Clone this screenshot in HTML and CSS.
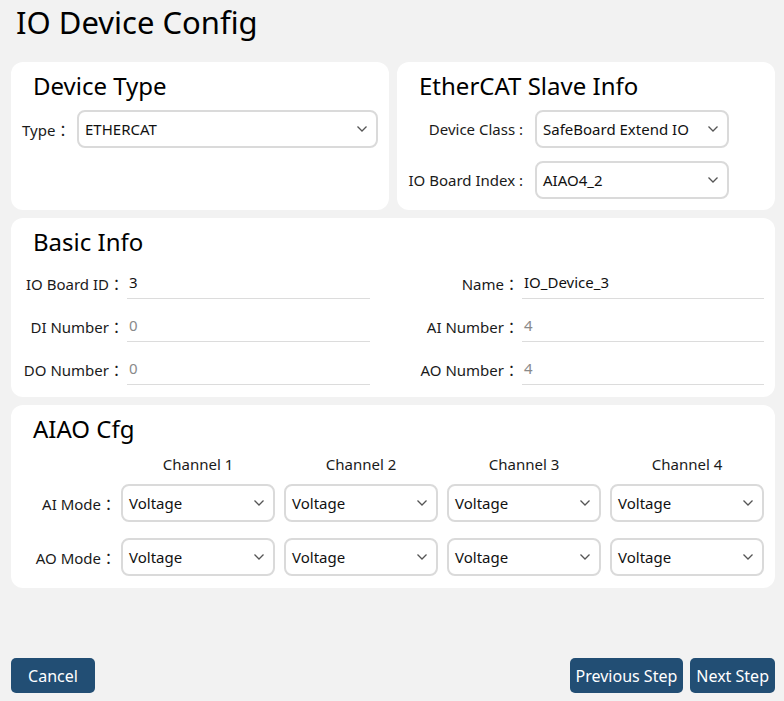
FILE: index.html
```html
<!DOCTYPE html>
<html lang="en">
<head>
    <meta charset="utf-8">
    <meta name="viewport" content="width=device-width, initial-scale=1.0">
    <title>IO Device Config</title>
    <link rel="stylesheet" href="styles.css">
</head>
<body>
    <h1 class="page-title">IO Device Config</h1>

    <div class="top-row">
        <!-- device type -->
        <div class="card">
            <h2 class="card-title">Device Type</h2>
            <div class="type-row">
                <label class="type-label">Type：</label>
                <div class="select">
                    <span>ETHERCAT</span>
                    <svg class="chevron" viewBox="0 0 10 6"><polyline points="0.5,0.5 5,5 9.5,0.5"/></svg>
                </div>
            </div>
        </div>

        <!-- ethercat slave -->
        <div class="card">
            <h2 class="card-title">EtherCAT Slave Info</h2>
            <div class="slave-form">
                <div class="slave-row">
                    <label class="slave-label">Device Class :</label>
                    <div class="select slave-select">
                        <span>SafeBoard Extend IO</span>
                        <svg class="chevron" viewBox="0 0 10 6"><polyline points="0.5,0.5 5,5 9.5,0.5"/></svg>
                    </div>
                </div>
                <div class="slave-row">
                    <label class="slave-label">IO Board Index :</label>
                    <div class="select slave-select">
                        <span>AIAO4_2</span>
                        <svg class="chevron" viewBox="0 0 10 6"><polyline points="0.5,0.5 5,5 9.5,0.5"/></svg>
                    </div>
                </div>
            </div>
        </div>
    </div>

    <!-- basic info -->
    <div class="card">
        <h2 class="card-title">Basic Info</h2>
        <div class="info-grid">
            <div class="field left">
                <label>IO Board ID：</label>
                <div class="line-input">3</div>
            </div>
            <div class="field right">
                <label>Name：</label>
                <div class="line-input">IO_Device_3</div>
            </div>
            <div class="field left">
                <label>DI Number：</label>
                <div class="line-input disabled">0</div>
            </div>
            <div class="field right">
                <label>AI Number：</label>
                <div class="line-input disabled">4</div>
            </div>
            <div class="field left">
                <label>DO Number：</label>
                <div class="line-input disabled">0</div>
            </div>
            <div class="field right">
                <label>AO Number：</label>
                <div class="line-input disabled">4</div>
            </div>
        </div>
    </div>

    <!-- analog channels -->
    <div class="card">
        <h2 class="card-title">AIAO Cfg</h2>
        <div class="channel-grid channel-heads">
            <div></div>
            <div class="channel-head">Channel 1</div>
            <div class="channel-head">Channel 2</div>
            <div class="channel-head">Channel 3</div>
            <div class="channel-head">Channel 4</div>
        </div>
        <div class="channel-grid" id="modeRows"></div>
    </div>

    <div class="footer">
        <button class="btn">Cancel</button>
        <div class="footer-right">
            <button class="btn">Previous Step</button>
            <button class="btn">Next Step</button>
        </div>
    </div>

    <script>
        // build the AI / AO mode selects, one per channel
        const modes = ['AI Mode', 'AO Mode'];
        const chevron = '<svg class="chevron" viewBox="0 0 10 6"><polyline points="0.5,0.5 5,5 9.5,0.5"/></svg>';
        let html = '';
        modes.forEach(mode => {
            html += `<label class="mode-label">${mode}：</label>`;
            for (let i = 0; i < 4; i++) {
                html += `<div class="select"><span>Voltage</span>${chevron}</div>`;
            }
        });
        document.getElementById('modeRows').innerHTML = html;
    </script>
</body>
</html>
```

FILE: styles.css
```css
:root {
    --primary: #224e74;
    --bg: #f2f2f2;
    --border: #dadada;
    --text: #1a1a1a;
}

html, body {
    height: 100%;
}

body {
    margin: 0;
    padding: 0 9px 8px 11px;
    box-sizing: border-box;
    background: var(--bg);
    font-family: 'Noto Sans', 'Noto Sans CJK TC', sans-serif;
    font-size: 15px;
    color: var(--text);
    display: flex;
    flex-direction: column;
}

label {
    white-space: nowrap;
}

.page-title {
    margin: 0 0 18px 5px;
    font-size: 31px;
    font-weight: normal;
    line-height: 44px;
    color: #000;
}

.top-row {
    display: grid;
    grid-template-columns: 1fr 1fr;
    gap: 8px;
}

.card {
    background: #fff;
    border-radius: 12px;
    padding: 8px 11px 12px;
    margin-bottom: 8px;
    box-sizing: border-box;
}

.top-row .card {
    height: 148px;
    margin-bottom: 8px;
}

.card-title {
    margin: 0 0 8px 11px;
    font-size: 24px;
    font-weight: normal;
    line-height: 32px;
    color: #000;
}

/* dropdown box */
.select {
    height: 38px;
    box-sizing: border-box;
    border: 2px solid var(--border);
    border-radius: 8px;
    padding: 0 9px 0 6px;
    display: flex;
    align-items: center;
    justify-content: space-between;
    background: #fff;
    color: #111;
}

.chevron {
    width: 10px;
    height: 6px;
    fill: none;
    stroke: #555;
    stroke-width: 1.3;
    flex-shrink: 0;
}

.type-row {
    display: flex;
    align-items: center;
}

.type-label {
    width: 55px;
}

.type-row .select {
    flex: 1;
}

.slave-form {
    display: flex;
    flex-direction: column;
    gap: 13px;
}

.slave-row {
    display: flex;
    align-items: center;
}

.slave-label {
    width: 127px;
    padding-right: 12px;
    box-sizing: border-box;
    text-align: right;
}

.slave-select {
    width: 194px;
}

/* basic info */
.info-grid {
    display: grid;
    grid-template-columns: 348px 372px;
    column-gap: 22px;
    row-gap: 11px;
    margin-top: 9px;
}

.field {
    display: flex;
    align-items: center;
}

.field label {
    text-align: right;
    box-sizing: border-box;
    padding-right: 3px;
    flex-shrink: 0;
}

.field.left label {
    width: 105px;
}

.field.right label {
    width: 130px;
}

.line-input {
    flex: 1;
    height: 32px;
    line-height: 31px;
    box-sizing: border-box;
    border-bottom: 1px solid #dcdcdc;
    padding-left: 2px;
    color: #111;
}

.line-input.disabled {
    color: #8a8a8a;
}

/* channel table */
.channel-grid {
    display: grid;
    grid-template-columns: 90px repeat(4, 1fr);
    column-gap: 9px;
    row-gap: 16px;
    align-items: center;
}

.channel-heads {
    margin-bottom: 9px;
}

.channel-head {
    text-align: center;
    line-height: 22px;
}

.mode-label {
    text-align: right;
    margin-right: -4px;
}

.footer {
    margin-top: auto;
    display: flex;
    justify-content: space-between;
}

.footer-right {
    display: flex;
    gap: 7px;
}

.btn {
    background: var(--primary);
    color: #fff;
    border: none;
    border-radius: 5px;
    height: 35px;
    min-width: 84px;
    padding: 0 6px;
    font-family: 'Noto Sans', sans-serif;
    font-size: 16px;
    cursor: pointer;
}
```
